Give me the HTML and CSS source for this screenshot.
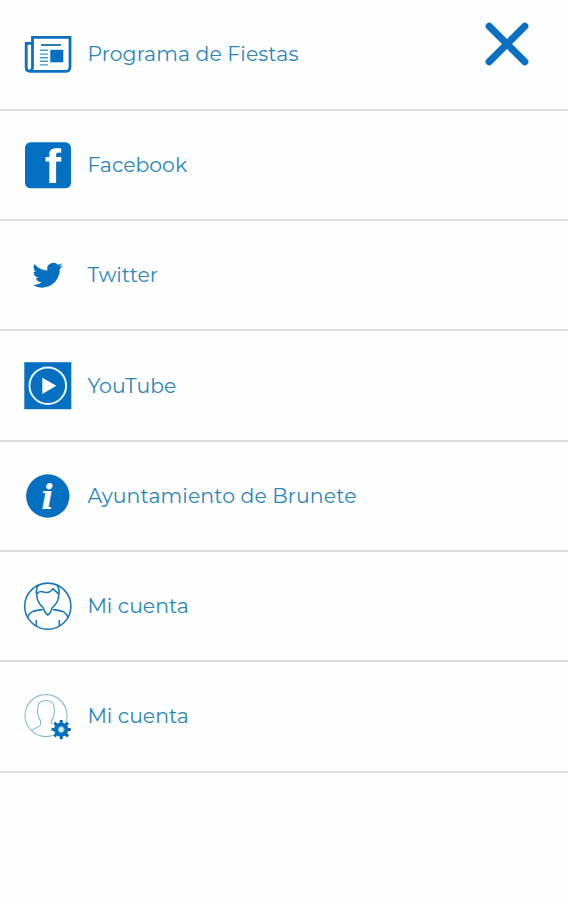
FILE: index.html
```html
<!DOCTYPE html>
<html lang="es">
<head>
    <meta charset="utf-8">
    <title>Menú</title>
    <link rel="stylesheet" href="styles.css">
</head>
<body>

    <button class="close" aria-label="Cerrar">
        <svg width="44" height="44" viewBox="0 0 44 44">
            <path d="M4.2 4.2L39.8 39.8M39.8 4.2L4.2 39.8" />
        </svg>
    </button>

    <nav class="menu">
        <a class="item" href="#">
            <svg class="icon" viewBox="0 0 48 48">
                <path class="line-bold" d="M8.5 36V7.4H46V37Q46 41.3 42 41.3H6Q2.2 41.3 2.2 37.5V13.3H8.5V36.5Q8.5 40.5 5.8 40.9" />
                <path class="line-mid" d="M17 15H37" />
                <path class="line-thin" d="M16 20.3H24M16 24.1H24M16 27.7H24M16 31.3H24M16 34.9H24" />
                <path class="solid" d="M26.3 19.8H39.3V32.3H26.3Z" />
            </svg>
            <span class="label wide">Programa de Fiestas</span>
        </a>
        <a class="item" href="#">
            <svg class="icon" viewBox="0 0 48 48">
                <rect class="solid" x="1" y="1.3" width="46" height="46" rx="5.5" />
                <text class="letter-f" x="20.8" y="42.3">f</text>
            </svg>
            <span class="label">Facebook</span>
        </a>
        <a class="item" href="#">
            <svg class="icon" viewBox="0 0 48 48">
                <path class="solid" transform="translate(8.4 9) scale(1.27)" d="M23.953 4.57a10 10 0 01-2.825.775 4.958 4.958 0 002.163-2.723c-.951.555-2.005.959-3.127 1.184a4.92 4.92 0 00-8.384 4.482C7.69 8.095 4.067 6.13 1.64 3.162a4.822 4.822 0 00-.666 2.475c0 1.71.87 3.213 2.188 4.096a4.904 4.904 0 01-2.228-.616v.06a4.923 4.923 0 003.946 4.827 4.996 4.996 0 01-2.212.085 4.936 4.936 0 004.604 3.417 9.867 9.867 0 01-6.102 2.105c-.39 0-.779-.023-1.17-.067a13.995 13.995 0 007.557 2.209c9.053 0 13.998-7.496 13.998-13.985 0-.21 0-.42-.015-.63A9.935 9.935 0 0024 4.59z" />
            </svg>
            <span class="label">Twitter</span>
        </a>
        <a class="item" href="#">
            <svg class="icon" viewBox="0 0 48 48">
                <rect class="solid" x="0.3" y="0.2" width="47" height="47" />
                <circle class="ring" cx="23.8" cy="23.7" r="18.3" />
                <path class="white" d="M18.3 15.7L32.3 23.8L18.3 31.9Z" />
            </svg>
            <span class="label">YouTube</span>
        </a>
        <a class="item" href="#">
            <svg class="icon" viewBox="0 0 48 48">
                <circle class="solid" cx="23.8" cy="24" r="21.7" />
                <text class="letter-i" x="17.2" y="36.6">i</text>
            </svg>
            <span class="label wide">Ayuntamiento de Brunete</span>
        </a>
        <a class="item" href="#">
            <svg class="icon" viewBox="0 0 48 48">
                <circle class="line" cx="23.8" cy="24.2" r="23.1" />
                <path class="line" d="M14.5 3C11.5 7 12 11 13 15C13.5 20 16 23 19.5 26C20.5 28 19 29.5 23.8 33C28.5 29.5 27 28 28 26C31.5 23 34 20 34.5 15C35.5 11 36 7 33 3" />
                <path class="line" d="M13 12C15.5 7.5 19 10.5 23 10.5C27 10.5 28 6.5 29.5 6.7C29 8.5 32 8.5 34.5 12" />
                <path class="line" d="M18.8 27.5C11 28.5 5 29 3.5 36M28.8 27.5C36.5 28.5 42.5 29 44 36M12.3 38V44M35.3 38V44" />
            </svg>
            <span class="label">Mi cuenta</span>
        </a>
        <a class="item" href="#">
            <svg class="icon" viewBox="0 0 48 48">
                <circle class="line-pale" cx="22" cy="23.6" r="21" />
                <path class="line-pale" d="M7.5 38.5C11 35.5 16 35.5 16.5 33V28.5C14 26 14.5 24 13.7 21C13 19.5 13.5 18 14 16C13.8 10.5 17.5 8.5 22 8.5C26.5 8.5 30.3 10.5 30 16C30.5 18 31 19.5 30.3 21C29.5 24 30 26 27.5 28.5V32" />
                <circle class="halo" cx="37.2" cy="37.6" r="8.5" />
                <path class="gear-teeth" d="M37.2 28V47.2M27.6 37.6H46.8M30.4 30.8L44 44.4M44 30.8L30.4 44.4" />
                <circle class="solid" cx="37.2" cy="37.6" r="7.2" />
                <circle class="gear-hole" cx="37.2" cy="37.6" r="3" />
            </svg>
            <span class="label">Mi cuenta</span>
        </a>
    </nav>

</body>
</html>
```
FILE: styles.css
```css
body {
    margin: 0;
    background: #fefefe;
    font-family: Montserrat, Inter, sans-serif;
}

.close {
    position: absolute;
    top: 22px;
    right: 39px;
    padding: 0;
    border: none;
    background: none;
    cursor: pointer;
}

    .close svg {
        display: block;
        fill: none;
        stroke: #0b70c0;
        stroke-width: 7.2;
        stroke-linecap: round;
    }

.menu {
    display: flex;
    flex-direction: column;
}

.item {
    display: flex;
    align-items: center;
    gap: 15.4px;
    height: 108.3px;
    padding-left: 24px;
    border-bottom: 2px solid #dedede;
    text-decoration: none;
}

    .item:first-child {
        height: 108.8px;
    }

.icon {
    flex: none;
    width: 48px;
    height: 48px;
    fill: none;
    stroke: none;
    overflow: visible;
}

.label {
    padding-bottom: 1px;
    font-size: 20.4px;
    font-weight: 400;
    color: #2a86ba;
    white-space: nowrap;
}

.wide {
    letter-spacing: 0.1px;
}

.solid {
    fill: #0570c2;
}

.white {
    fill: #fff;
}

.line {
    stroke: #1a78b8;
    stroke-width: 1.6;
}

.line-pale {
    stroke: #86bfd2;
    stroke-width: 1.1;
}

.line-bold {
    stroke: #0b70c0;
    stroke-width: 2.8;
}

.line-mid {
    stroke: #2580bd;
    stroke-width: 2;
}

.line-thin {
    stroke: #4b9cc4;
    stroke-width: 1.4;
}

.ring {
    stroke: #e6f6fb;
    stroke-width: 2;
}

.letter-f {
    fill: #fff;
    font: bold 49px/1 "Liberation Sans", Arial, sans-serif;
}

.letter-i {
    fill: #fff;
    font: italic bold 33px/1 "DejaVu Serif", serif;
}

.halo {
    fill: #fefefe;
}

.gear-teeth {
    stroke: #0b68ac;
    stroke-width: 3;
}

.gear-hole {
    fill: #d5eef5;
    stroke: #5ba4d4;
    stroke-width: 1;
}
```
